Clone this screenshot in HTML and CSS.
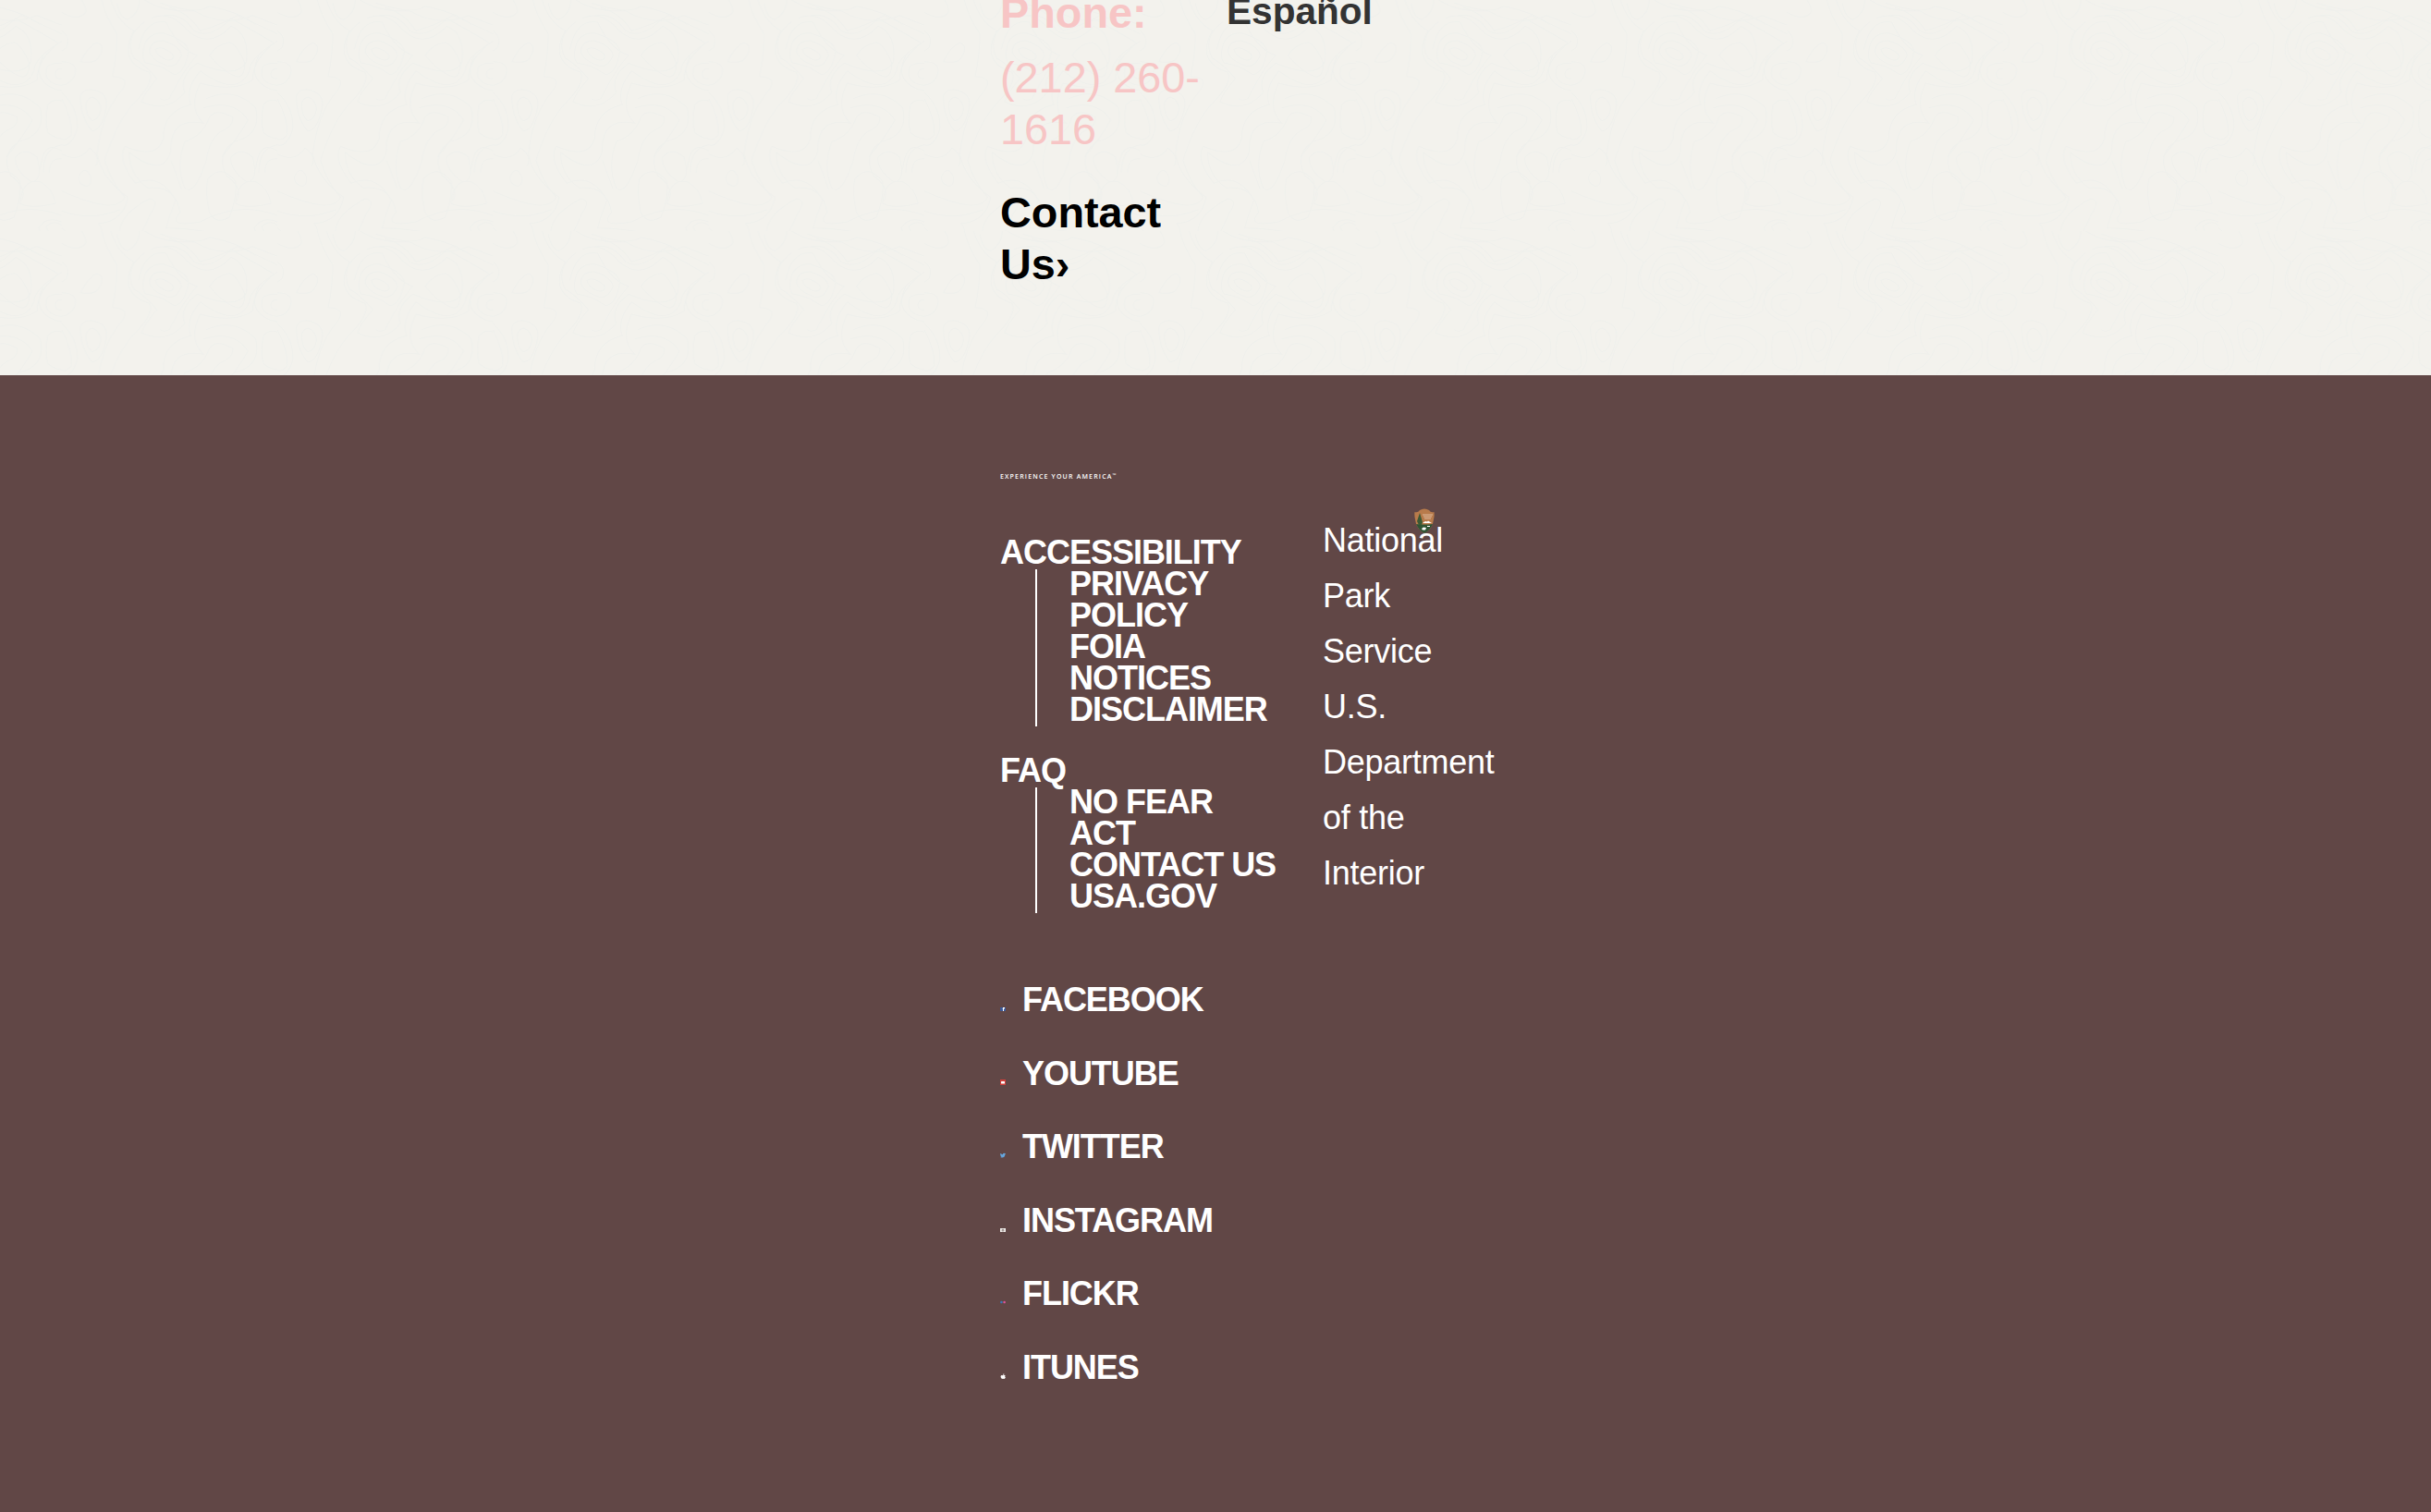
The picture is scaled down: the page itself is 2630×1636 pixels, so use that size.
FILE: index.html
```html
<!DOCTYPE html>
<html lang="en">
<head>
<meta charset="utf-8">
<title>National Park Service</title>
<link rel="stylesheet" href="styles.css">
</head>
<body>
<main class="park-info">
  <svg class="contours" aria-hidden="true">
    <defs>
      <pattern id="topo" x="300" y="0" width="233.33" height="250" patternUnits="userSpaceOnUse">
        <g transform="scale(.33333)" fill="none" stroke="#eff0ec" stroke-width="3">
          <path d="M285 165Q290 130 330 132Q385 150 390 180Q370 225 340 212Q290 195 285 165ZM305 160Q325 145 360 175Q370 195 345 195Q310 185 305 160ZM265 170Q270 105 330 107Q405 130 412 165Q400 240 365 242Q320 210 275 205Q262 195 265 170Z"/>
          <path d="M480 180Q500 145 545 137Q570 145 595 205Q595 245 575 250Q530 240 480 180ZM695 223Q710 225 710 240Q707 256 693 256Q678 252 679 238Q683 225 695 223ZM653 215Q690 195 744 215Q745 260 705 277Q655 275 649 240Z"/>
          <path d="M100 315Q125 325 127 355Q120 390 98 392Q78 375 79 335Q85 317 100 315ZM95 290Q155 300 145 350Q130 425 98 425Q60 380 62 310Q70 290 95 290ZM62 200Q85 150 115 138Q145 150 118 190Q105 207 62 200Z"/>
          <path d="M480 380Q500 350 555 380Q560 410 520 425Q480 450 470 520Q430 640 400 610Q370 540 400 460Q460 440 480 380ZM655 340Q680 310 725 340Q755 420 730 450Q680 455 655 430Q645 390 655 340ZM550 510Q580 475 620 510Q640 590 600 590Q545 550 550 510Z"/>
          <path d="M475 580Q520 530 565 590Q570 640 545 705Q500 730 480 690Q465 630 475 580ZM565 660Q600 680 680 660Q670 610 630 590Q570 580 565 660ZM190 740Q200 690 285 645Q320 650 290 690Q240 810 210 810Q180 790 190 740ZM55 575Q75 530 95 575Q95 610 75 603Q55 595 55 575Z"/>
          <path d="M625 740Q650 700 700 720Q740 770 700 785Q640 785 625 740ZM650 735Q680 710 705 735Q715 765 685 767Q655 760 650 735ZM180 10Q190 60 215 64Q255 40 252 0M0 40Q55 70 78 40Q80 20 65 0M0 100Q30 120 15 155L0 165M0 200Q45 200 45 230Q40 270 0 277"/>
          <path d="M130 0Q140 50 180 110Q180 170 165 248Q230 250 190 300Q130 370 115 500Q130 580 215 640Q200 720 120 725Q130 740 130 750M160 0Q180 70 235 100Q180 200 285 235Q300 270 240 330Q180 390 140 520Q160 590 205 640Q180 700 0 620M270 0Q330 40 430 35Q520 90 620 50Q720 90 740 95"/>
          <path d="M250 160Q270 60 340 72Q380 160 440 180Q400 220 350 320Q330 330 320 320M290 60Q350 30 410 100Q480 160 550 85Q610 110 600 200Q570 260 440 205Q380 250 400 300Q340 370 260 330Q270 300 310 255Q260 200 235 190Q200 120 270 70"/>
          <path d="M330 50Q390 40 430 100Q480 130 550 60Q640 110 690 140Q610 190 610 230Q570 320 450 230Q400 290 420 340Q330 360 330 450Q310 520 205 475Q180 520 240 595Q320 560 370 650Q350 700 340 740Q450 740 560 775Q670 800 700 815"/>
          <path d="M350 25Q410 40 450 100Q520 80 570 50Q660 90 720 120Q620 180 620 260Q560 300 450 270Q410 350 460 400Q350 380 355 490Q330 580 220 495Q220 570 280 610Q370 600 385 690Q340 740 450 720Q580 650 700 700M640 180Q600 260 680 290Q760 300 750 400"/>
          <path d="M320 10Q440 50 480 20Q580 40 630 80M470 320Q560 280 630 350Q650 440 560 460Q500 500 535 570Q590 610 570 650M460 350Q560 320 605 390Q570 450 520 510M630 550Q640 450 700 490Q780 520 760 560Q800 630 840 640M0 500Q60 530 90 480Q130 510 110 540"/>
          <path d="M640 560Q640 480 700 470Q780 430 780 350M660 560Q660 500 720 520Q760 590 820 620M0 300Q55 350 50 420Q30 480 0 470M0 320Q40 400 30 440Q10 460 0 450M0 685Q90 720 190 680M0 740Q60 790 45 810M390 615Q370 560 355 520"/>
        </g>
      </pattern>
    </defs>
    <rect width="100%" height="100%" fill="url(#topo)"/>
  </svg>
  <div class="contact">
    <h3 class="contact-label">Phone:</h3>
    <p class="contact-number">(212) 260-1616</p>
    <a class="contact-link">Contact Us›</a>
  </div>
  <a class="language">Español</a>
</main>
<footer class="footer">
  <p class="tagline">EXPERIENCE YOUR AMERICA<span class="tm">™</span></p>
  <div class="columns">
    <nav class="links">
      <div class="group">
        <a>ACCESSIBILITY</a>
        <ul><li>PRIVACY POLICY</li><li>FOIA</li><li>NOTICES</li><li>DISCLAIMER</li></ul>
      </div>
      <div class="group">
        <a>FAQ</a>
        <ul><li>NO FEAR ACT</li><li>CONTACT US</li><li>USA.GOV</li></ul>
      </div>
    </nav>
    <div class="agency">
      <svg class="shield" viewBox="0 0 22 27"><path d="M.5 4Q4 5 6 2Q11-1 16 2Q18 5 21.5 4Q22 8 21 12Q20 22 11 27Q2 22 1 12Q0 8 .5 4Z" fill="#b87b4b"/><path d="M2 17Q10 18 20 17Q17 24 11 27Q5 24 2 17Z" fill="#2f5434"/><path d="M6 5L3 14L5 18H8L9 15Z" fill="#3c5935"/><path d="M9 7H20M10 9H19M11 11H18" stroke="#e8ccb2" stroke-width=".8"/><path d="M9 16L12 14L14 14.5L15 13.5L19 16ZM8 22L10 20.5L13 21L12 23.5H9ZM14 19H17V20H14Z" fill="#fff"/></svg>
      <p>National Park Service</p>
      <p>U.S. Department of the Interior</p>
    </div>
  </div>
  <ul class="social">
    <li><svg viewBox="0 0 6 6"><path d="M0 2H6V6H0Z" fill="#3b5998"/><path d="M3 6V4H2.6V3.3H3V2H5V3H4V3.4H5V4H4V6Z" fill="#fff"/></svg>FACEBOOK</li>
    <li><svg viewBox="0 0 6 6"><path d="M0 0H6V6H0Z" fill="#d0403b"/><rect x="1" y="2" width="4" height="2.6" rx=".5" fill="#fff"/></svg>YOUTUBE</li>
    <li><svg viewBox="0 0 6 6"><path d="M0 1L2.8 2.3Q3.2.4 5 1H6L5.3 2.5Q5 5.8 1.7 5.5L0 5L1.4 4.6L.4 3.5Z" fill="#65a5dd"/></svg>TWITTER</li>
    <li><svg viewBox="0 0 6 6"><path d="M0 2H6V6H0Z" fill="#f1efec"/><circle cx="3" cy="4.1" r="1" fill="none" stroke="#655451" stroke-width=".7"/></svg>INSTAGRAM</li>
    <li><svg viewBox="0 0 6 6"><circle cx="1.4" cy="3" r="1.3" fill="#3978bb"/><circle cx="4.6" cy="3" r="1.3" fill="#df5499"/></svg>FLICKR</li>
    <li><svg viewBox="0 0 6 6"><path d="M3 2Q3 .6 4.3.3Q4.4 1.5 3 2ZM3 2.2Q5 1.3 5.7 2.3Q4.5 3.4 5.9 4.3Q5 6.2 4 6Q3 5.6 2 6Q.5 5 .5 3Q1.2 1.4 3 2.2Z" fill="#fff"/></svg>ITUNES</li>
  </ul>
</footer>
</body>
</html>
```
FILE: styles.css
```css
body, p, h3, ul { margin: 0; padding: 0; }
ul { list-style: none; }
body {
  font-family: "Liberation Sans", Arial, sans-serif;
  font-size: 36px;
  background: #614746;
  color: #fff;
}
.park-info {
  position: relative;
  box-sizing: border-box;
  display: flex;
  height: 406px;
  padding-left: 1082px;
  overflow: hidden;
  background: #f3f2ed;
}
.contours { position: absolute; inset: 0; width: 100%; height: 100%; }
.contact {
  position: relative;
  width: 245px;
  margin-top: -14px;
  font-size: 46.8px;
  line-height: 56px;
  color: #f7c5c5;
}
.contact-label { font-size: inherit; }
.contact-number { width: 220px; margin: 14px 0 34px; }
.contact-link { display: block; width: 200px; font-weight: bold; color: #000; }
.language {
  position: relative;
  margin-top: -12px;
  font-size: 40.6px;
  line-height: 48px;
  font-weight: bold;
  color: #333;
}
.footer { height: 1124px; padding: 106px 0 0 1082px; }
.tagline {
  height: 42px;
  font: 600 7px/7px "Open Sans", sans-serif;
  letter-spacing: 1.18px;
}
.tm { font-size: 5px; vertical-align: 2px; line-height: 0; }
.columns { display: flex; height: 483px; }
.links {
  width: 349px;
  padding-top: 27px;
  font-weight: bold;
  line-height: 34px;
  letter-spacing: -1.02px;
}
.group { margin-bottom: 32px; }
.group a { display: block; }
.group ul { position: relative; width: 230px; margin-left: 38px; padding-left: 37px; }
.group ul::before {
  content: "";
  position: absolute;
  left: 0;
  top: 1px;
  width: 2px;
  height: 100%;
  background: #fff;
}
.group li:first-child { width: 170px; }
.agency { position: relative; width: 190px; line-height: 60px; padding-top: 1px; letter-spacing: -0.25px; }
.agency p { position: relative; width: 130px; }
.shield { position: absolute; left: 99px; top: -4px; width: 22px; height: 27px; }
.social {
  display: grid;
  grid-auto-rows: 79.6px;
  font-weight: bold;
  line-height: 40px;
  letter-spacing: -1.05px;
  padding-top: 25px;
}
.social li { display: flex; align-items: baseline; gap: 18px; }
.social svg { width: 6px; height: 6px; }
```
